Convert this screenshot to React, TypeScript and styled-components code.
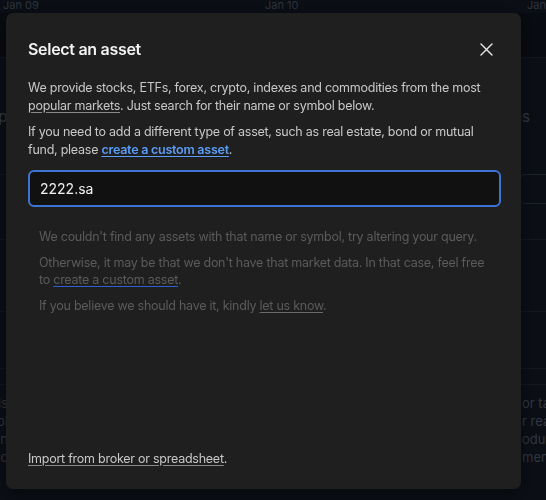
import React, { useState } from "react";
import styled, { createGlobalStyle } from "styled-components";

const GlobalStyle = createGlobalStyle`
  html, body {
    margin: 0;
    padding: 0;
    background: #0d1119;
    font-family: Inter, "Noto Sans", sans-serif;
    -webkit-font-smoothing: antialiased;
  }
`;

const App = () => {
  const [query, setQuery] = useState("2222.sa");

  return (
    <>
      <GlobalStyle />
      <Page>
        <Axis>
          <AxisLabel>Jan 09</AxisLabel>
          <AxisLabel>Jan 10</AxisLabel>
          <AxisLabel>Jan 11</AxisLabel>
        </Axis>
        <Header />
        <Section $height={116}>
          <EdgeText $side="left">Setup</EdgeText>
          <EdgeText $side="right">Holdings</EdgeText>
        </Section>
        <Section $height={64}>
          <EdgeBox />
        </Section>
        <Section $height={71} />
        <Section $height={56} />
        <Section $height={15} />
        <Notes>
          <NoteCol $side="left">
            <span>tools</span>
            <span>portfol</span>
            <span>plan</span>
            <span>periodic</span>
          </NoteCol>
          <NoteCol $side="right">
            <span>or tax</span>
            <span>r real</span>
            <span>oduct</span>
            <span>ment</span>
          </NoteCol>
        </Notes>
      </Page>

      <Overlay>
        <Modal role="dialog" aria-labelledby="modal-title">
          <ModalHeader>
            <Title id="modal-title">Select an asset</Title>
            <CloseButton aria-label="Close">
              <svg width="13" height="13" viewBox="0 0 13 13" fill="none">
                <path d="M1 1L12 12M12 1L1 12" stroke="#e6e6e6" strokeWidth="1.4" strokeLinecap="round" />
              </svg>
            </CloseButton>
          </ModalHeader>

          <Text>
            We provide stocks, ETFs, forex, crypto, indexes and commodities from the most{" "}
            <PlainLink href="#">popular markets</PlainLink>. Just search for their name or symbol below.
          </Text>
          <Text>
            If you need to add a different type of asset, such as real estate, bond or mutual
            fund, please <BlueLink href="#">create a custom asset</BlueLink>.
          </Text>

          <SearchInput value={query} onChange={(e) => setQuery(e.target.value)} />

          <Empty>
            <EmptyText>
              We couldn't find any assets with that name or symbol, try altering your query.
            </EmptyText>
            <EmptyText>
              Otherwise, it may be that we don't have that market data. In that case, feel free
              to <MutedLink href="#" $line="#2f5fd0">create a custom asset</MutedLink>.
            </EmptyText>
            <EmptyText>
              If you believe we should have it, kindly <MutedLink href="#" $line="#6a6a6a">let us know</MutedLink>.
            </EmptyText>
          </Empty>

          <Footer>
            <PlainLink href="#">Import from broker or spreadsheet</PlainLink>.
          </Footer>
        </Modal>
      </Overlay>
    </>
  );
};

export default App;

const Page = styled.div`
  width: 546px;
  height: 500px;
  overflow: hidden;
  display: flex;
  flex-direction: column;
  color: #3b414c;
`;

const Axis = styled.div`
  display: flex;
  height: 13px;
  padding-left: 3px;
`;

const AxisLabel = styled.span`
  flex: 0 0 262px;
  font-size: 11px;
  line-height: 11px;
  color: #363c48;
`;

const Header = styled.div`
  height: 44px;
  background: #0a0d14;
  border-bottom: 1px solid #151a24;
`;

const Section = styled.div<{ $height: number }>`
  height: ${(p) => p.$height}px;
  border-bottom: 1px solid #171c26;
  display: flex;
  justify-content: space-between;
  align-items: center;
`;

const EdgeText = styled.span<{ $side: "left" | "right" }>`
  font-size: 15px;
  color: #3c424d;
  ${(p) => (p.$side === "left" ? "margin-left: -34px;" : "margin-right: 16px;")}
`;

const EdgeBox = styled.div`
  margin-left: auto;
  margin-right: -10px;
  margin-bottom: 36px;
  width: 34px;
  height: 28px;
  border: 1px solid #222834;
  border-radius: 5px;
`;

const Notes = styled.div`
  display: flex;
  justify-content: space-between;
  padding-top: 9px;
`;

const NoteCol = styled.div<{ $side: "left" | "right" }>`
  display: flex;
  flex-direction: column;
  font-size: 13px;
  line-height: 18px;
  color: #3a404b;
  align-items: ${(p) => (p.$side === "left" ? "flex-end" : "flex-start")};
  width: 60px;
  ${(p) => (p.$side === "left" ? "margin-left: -52px;" : "margin-right: -36px;")}
`;

const Overlay = styled.div`
  position: fixed;
  inset: 0;
  background: rgba(0, 0, 0, 0.12);
`;

const Modal = styled.div`
  position: absolute;
  left: 6px;
  top: 13px;
  width: 515px;
  height: 476px;
  box-sizing: border-box;
  padding: 26px 20px 22px 22px;
  background: #1f1f1f;
  border-radius: 7px;
  box-shadow: 0 4px 18px rgba(0, 0, 0, 0.5);
  display: flex;
  flex-direction: column;
  color: #c6c6c6;
`;

const ModalHeader = styled.div`
  display: flex;
  align-items: center;
  justify-content: space-between;
  height: 20px;
  margin-bottom: 20px;
`;

const Title = styled.h2`
  margin: 0;
  font-size: 16px;
  font-weight: 600;
  color: #f2f2f2;
  letter-spacing: -0.3px;
`;

const CloseButton = styled.button`
  background: none;
  border: none;
  padding: 0;
  margin-right: 8px;
  display: flex;
  cursor: pointer;
`;

const Text = styled.p`
  margin: 0 0 9px;
  font-size: 12.5px;
  line-height: 17.5px;
  letter-spacing: -0.25px;
  color: #c8c8c8;
`;

const PlainLink = styled.a`
  color: inherit;
  text-decoration: underline;
  text-decoration-color: #8a8a8a;
  text-underline-offset: 2px;
`;

const BlueLink = styled.a`
  color: #5b9cf6;
  font-weight: 600;
  text-decoration: underline;
  text-underline-offset: 2px;
`;

const SearchInput = styled.input`
  margin-top: 3px;
  height: 37px;
  box-sizing: border-box;
  width: 473px;
  padding: 0 10px;
  background: #111111;
  border: 2px solid #3d74d4;
  border-radius: 6px;
  color: #f0f0f0;
  font-family: inherit;
  font-size: 14px;
  outline: none;
`;

const Empty = styled.div`
  padding: 21px 8px 0 11px;
`;

const EmptyText = styled.p`
  margin: 0 0 8px;
  font-size: 12.5px;
  line-height: 17.5px;
  letter-spacing: -0.25px;
  color: #5b5b5b;
`;

const MutedLink = styled.a<{ $line: string }>`
  color: inherit;
  text-decoration: underline;
  text-decoration-color: ${(p) => p.$line};
  text-underline-offset: 2px;
`;

const Footer = styled.div`
  margin-top: auto;
  font-size: 12.5px;
  line-height: 17.5px;
  letter-spacing: -0.25px;
  color: #c8c8c8;
`;
